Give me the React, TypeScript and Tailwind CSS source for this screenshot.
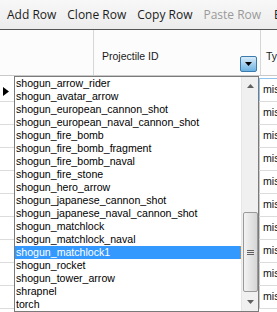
import { useState } from 'react';

const items = [
  'shogun_arrow_rider',
  'shogun_avatar_arrow',
  'shogun_european_cannon_shot',
  'shogun_european_naval_cannon_shot',
  'shogun_fire_bomb',
  'shogun_fire_bomb_fragment',
  'shogun_fire_bomb_naval',
  'shogun_fire_stone',
  'shogun_hero_arrow',
  'shogun_japanese_cannon_shot',
  'shogun_japanese_naval_cannon_shot',
  'shogun_matchlock',
  'shogun_matchlock_naval',
  'shogun_matchlock1',
  'shogun_rocket',
  'shogun_tower_arrow',
  'shrapnel',
  'torch',
];

const toolbar = [
  { label: 'Add Row', disabled: false },
  { label: 'Clone Row', disabled: false },
  { label: 'Copy Row', disabled: false },
  { label: 'Paste Row', disabled: true },
];

function Toolbar() {
  return (
    <div className="h-[30px] flex items-center pl-[7px] gap-[11px] whitespace-nowrap border-b border-[#555] bg-gradient-to-b from-[#f8f8f8] to-[#ececec] font-['Open_Sans',sans-serif] text-[12px]">
      {toolbar.map((t) => (
        <span key={t.label} className={t.disabled ? 'text-[#9a9a9a]' : 'text-[#1c1c1c]'}>
          {t.label}
        </span>
      ))}
      <span className="w-px h-[15px] bg-[#b4b4b4] -ml-[3px]" />
      <span className="text-[#1c1c1c] -ml-[6px]">Export</span>
    </div>
  );
}

function Header() {
  return (
    <div className="h-[46px] flex border-b border-[#c9c9c9] bg-[#fcfcfc] font-['Liberation_Sans',sans-serif] text-[10.5px] text-[#1a1a1a]">
      <div className="w-[94px] shrink-0 border-r border-[#d6d6d6]" />
      <div className="w-[167px] shrink-0 border-r border-[#d6d6d6] flex">
        <span className="flex-1 pl-[8px] pt-[19px]">Projectile ID</span>
        <button className="self-end mb-[3px] mr-[3px] w-[17px] h-[16px] border border-[#3d7bad] rounded-[2px] bg-gradient-to-b from-[#d9ecf9] to-[#6cb2e2] flex items-center justify-center">
          <svg width="7" height="4" viewBox="0 0 7 4">
            <path d="M0 0h7L3.5 4z" fill="#000" />
          </svg>
        </button>
      </div>
      <div className="pl-[5px] pt-[19px] whitespace-nowrap">Type</div>
    </div>
  );
}

function Body() {
  return (
    <div className="font-['Liberation_Sans',sans-serif] text-[10.6px] text-[#111]">
      {Array.from({ length: 10 }).map((_, i) => (
        <div key={i} className={`flex border-b border-[#dcdcdc] ${i === 0 ? 'h-[26px]' : 'h-[23px]'}`}>
          <div className="w-[14px] shrink-0 flex items-center pl-[3px] pt-[5px]">
            {i === 0 && (
              <svg width="6" height="9" viewBox="0 0 6 9">
                <path d="M0 0l6 4.5L0 9z" fill="#000" />
              </svg>
            )}
          </div>
          <div className="w-[245px] shrink-0" />
          <div
            className={`flex-1 flex items-center pl-[3px] border-l whitespace-nowrap ${
              i === 0 ? 'border-[#8fc1ea] border-t mt-[2px]' : 'border-[#c8c8c8]'
            }`}
          >
            missile
          </div>
        </div>
      ))}
    </div>
  );
}

function Scrollbar() {
  return (
    <div className="w-[17px] shrink-0 bg-[#f0f0f0] border-l border-[#e6e6e6] flex flex-col items-center">
      <div className="h-[17px] flex items-center justify-center">
        <svg width="7" height="4" viewBox="0 0 7 4">
          <path d="M3.5 0L7 4H0z" fill="#606060" />
        </svg>
      </div>
      <div className="h-[118px]" />
      <div className="w-[15px] h-[80px] rounded-[2px] border border-[#9a9a9a] bg-gradient-to-r from-[#f3f3f3] to-[#d6d6d6] flex flex-col items-center justify-center gap-[1px]">
        <span className="w-[7px] h-px bg-[#606060]" />
        <span className="w-[7px] h-px bg-[#606060]" />
        <span className="w-[7px] h-px bg-[#606060]" />
      </div>
      <div className="flex-1 flex items-center justify-center">
        <svg width="7" height="4" viewBox="0 0 7 4">
          <path d="M0 0h7L3.5 4z" fill="#606060" />
        </svg>
      </div>
    </div>
  );
}

export default function App() {
  const [selected, setSelected] = useState('shogun_matchlock1');

  return (
    <div className="relative w-[277px] h-[312px] overflow-hidden bg-white">
      <Toolbar />
      <Header />
      <Body />

      {/* Dropdown list */}
      <div className="absolute left-[14px] top-[76px] w-[245px] h-[236px] border border-[#7a7a7a] bg-white flex font-['Liberation_Sans',sans-serif] text-[10.6px] text-[#000]">
        <ul className="flex-1 overflow-hidden">
          {items.map((it) => (
            <li
              key={it}
              onClick={() => setSelected(it)}
              className={`h-[13px] leading-[13px] pl-[1px] whitespace-nowrap ${
                it === selected ? 'bg-[#3399ff] text-white border-r border-dotted border-[#c98a4a]' : ''
              }`}
            >
              {it}
            </li>
          ))}
        </ul>
        <Scrollbar />
      </div>
    </div>
  );
}
